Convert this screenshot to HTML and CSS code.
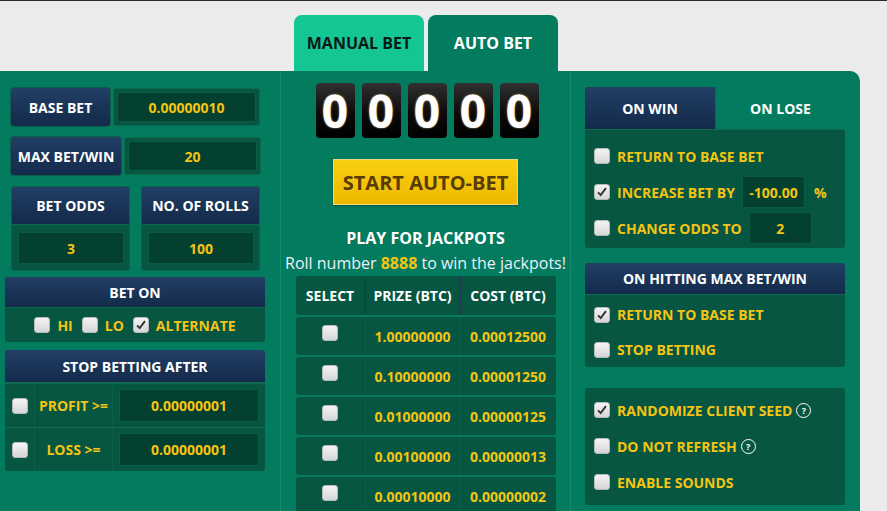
FILE: index.html
```html
<!DOCTYPE html>
<html lang="en">
<head>
    <meta charset="UTF-8">
    <meta name="viewport" content="width=device-width, initial-scale=1.0">
    <title>Auto Bet</title>
    <link rel="stylesheet" href="styles.css">
</head>
<body>
    <div class="tabs">
        <div class="tab tab-manual">MANUAL BET</div>
        <div class="tab tab-auto">AUTO BET</div>
    </div>

    <div class="panel">
        <div class="col col-left">
            <div class="field">
                <div class="field-label label-base">BASE BET</div>
                <div class="field-value value-base"><div class="input">0.00000010</div></div>
            </div>
            <div class="field field-max">
                <div class="field-label label-max">MAX BET/WIN</div>
                <div class="field-value value-max"><div class="input">20</div></div>
            </div>

            <div class="odds">
                <div class="odds-box">
                    <div class="navy odds-head">BET ODDS</div>
                    <div class="odds-body"><div class="input">3</div></div>
                </div>
                <div class="odds-box">
                    <div class="navy odds-head">NO. OF ROLLS</div>
                    <div class="odds-body"><div class="input">100</div></div>
                </div>
            </div>

            <div class="box bet-on">
                <div class="navy box-head">BET ON</div>
                <div class="bet-on-body">
                    <span class="check"></span><span class="yl">HI</span>
                    <span class="check"></span><span class="yl">LO</span>
                    <span class="check on"><svg viewBox="0 0 16 16"><path d="M3.5 8.5 L6.5 11.5 L12.5 3.5" /></svg></span><span class="yl">ALTERNATE</span>
                </div>
            </div>

            <div class="box stop">
                <div class="navy box-head stop-head">STOP BETTING AFTER</div>
                <div class="stop-row">
                    <div class="stop-cell"><span class="check"></span></div>
                    <div class="stop-cell yl">PROFIT &gt;=</div>
                    <div class="stop-cell stop-value"><div class="input">0.00000001</div></div>
                </div>
                <div class="stop-row">
                    <div class="stop-cell"><span class="check"></span></div>
                    <div class="stop-cell yl">LOSS &gt;=</div>
                    <div class="stop-cell stop-value"><div class="input">0.00000001</div></div>
                </div>
            </div>
        </div>

        <div class="col col-center">
            <div class="counter">
                <div class="digit">0</div>
                <div class="digit">0</div>
                <div class="digit">0</div>
                <div class="digit">0</div>
                <div class="digit">0</div>
            </div>
            <div class="start-btn">START AUTO-BET</div>
            <div class="jp-title">PLAY FOR JACKPOTS</div>
            <div class="jp-text">Roll number <b>8888</b> to win the jackpots!</div>
            <div class="jp-table">
                <div class="jp-row jp-head navy">
                    <div class="jp-cell">SELECT</div>
                    <div class="jp-cell">PRIZE (BTC)</div>
                    <div class="jp-cell">COST (BTC)</div>
                </div>
                <div class="jp-row">
                    <div class="jp-cell"><span class="check"></span></div>
                    <div class="jp-cell">1.00000000</div>
                    <div class="jp-cell">0.00012500</div>
                </div>
                <div class="jp-row">
                    <div class="jp-cell"><span class="check"></span></div>
                    <div class="jp-cell">0.10000000</div>
                    <div class="jp-cell">0.00001250</div>
                </div>
                <div class="jp-row">
                    <div class="jp-cell"><span class="check"></span></div>
                    <div class="jp-cell">0.01000000</div>
                    <div class="jp-cell">0.00000125</div>
                </div>
                <div class="jp-row">
                    <div class="jp-cell"><span class="check"></span></div>
                    <div class="jp-cell">0.00100000</div>
                    <div class="jp-cell">0.00000013</div>
                </div>
                <div class="jp-row">
                    <div class="jp-cell"><span class="check"></span></div>
                    <div class="jp-cell">0.00010000</div>
                    <div class="jp-cell">0.00000002</div>
                </div>
            </div>
        </div>

        <div class="col col-right">
            <div class="box win-lose">
                <div class="wl-tabs">
                    <div class="navy wl-tab">ON WIN</div>
                    <div class="wl-tab wl-lose">ON LOSE</div>
                </div>
                <div class="opt-body wl-body">
                    <div class="opt"><span class="check"></span><span class="yl">RETURN TO BASE BET</span></div>
                    <div class="opt"><span class="check on"><svg viewBox="0 0 16 16"><path d="M3.5 8.5 L6.5 11.5 L12.5 3.5" /></svg></span><span class="yl">INCREASE BET BY</span><div class="input small-input inc-input">-100.00</div><span class="yl pct">%</span></div>
                    <div class="opt"><span class="check"></span><span class="yl">CHANGE ODDS TO</span><div class="input small-input odds-input">2</div></div>
                </div>
            </div>

            <div class="box max-box">
                <div class="navy box-head max-head">ON HITTING MAX BET/WIN</div>
                <div class="opt-body max-body">
                    <div class="opt"><span class="check on"><svg viewBox="0 0 16 16"><path d="M3.5 8.5 L6.5 11.5 L12.5 3.5" /></svg></span><span class="yl">RETURN TO BASE BET</span></div>
                    <div class="opt"><span class="check"></span><span class="yl">STOP BETTING</span></div>
                </div>
            </div>

            <div class="box opt-body misc-box">
                <div class="opt"><span class="check on"><svg viewBox="0 0 16 16"><path d="M3.5 8.5 L6.5 11.5 L12.5 3.5" /></svg></span><span class="yl">RANDOMIZE CLIENT SEED</span><span class="help">?</span></div>
                <div class="opt"><span class="check"></span><span class="yl">DO NOT REFRESH</span><span class="help">?</span></div>
                <div class="opt"><span class="check"></span><span class="yl">ENABLE SOUNDS</span></div>
            </div>
        </div>
    </div>
</body>
</html>
```

FILE: styles.css
```css
:root {
    --green: #037b5e;
    --green-line: #139072;
    --box: #065641;
    --input: #03402f;
    --navy-top: #223f66;
    --navy-bottom: #132a4a;
    --yellow: #f4c414;
}

* {
    margin: 0;
    padding: 0;
    box-sizing: border-box;
}

body {
    background: #ebebeb;
    border-top: 1px solid #2a2a2a;
    font-family: 'Open Sans', 'Liberation Sans', sans-serif;
    font-weight: 700;
    font-size: 14px;
    color: #fff;
    overflow: hidden;
}

.navy {
    background: linear-gradient(var(--navy-top), var(--navy-bottom));
    color: #fff;
}

.yl {
    color: var(--yellow);
    white-space: nowrap;
}

.tabs {
    display: flex;
    gap: 4px;
    padding: 14px 0 0 294px;
}

.tab {
    width: 130px;
    height: 56px;
    border-radius: 8px 8px 0 0;
    display: flex;
    align-items: center;
    justify-content: center;
    font-size: 16px;
}

.tab-manual {
    background: #15c695;
    color: #0c1a16;
}

.tab-auto {
    background: var(--green);
    color: #fff;
}

.panel {
    width: 860px;
    height: 440px;
    background: var(--green);
    border-top-right-radius: 10px;
    display: flex;
    overflow: hidden;
}

.col {
    flex: none;
}

/* inputs */

.input {
    background: var(--input);
    border: 1px solid #0a5c46;
    border-radius: 2px;
    color: var(--yellow);
    display: flex;
    align-items: center;
    justify-content: center;
    width: 100%;
    height: 100%;
}

/* left column */

.col-left {
    width: 280px;
    padding: 17px 0 0 5px;
}

.field {
    display: flex;
    gap: 3px;
    height: 38px;
    margin-left: 6px;
}

.field-max {
    margin-top: 11px;
}

.field-label {
    background: linear-gradient(var(--navy-top), var(--navy-bottom));
    border-radius: 3px;
    display: flex;
    align-items: center;
    justify-content: center;
    box-shadow: 0 0 0 1px #0b5f48;
    white-space: nowrap;
}

.label-base { width: 99px; }
.label-max { width: 110px; }

.field-value {
    background: var(--box);
    border: 1px solid #0b684f;
    border-radius: 3px;
    padding: 3px;
}

.value-base { width: 147px; }
.value-max { width: 137px; }

.odds {
    display: flex;
    gap: 11px;
    margin: 11px 0 6px 6px;
}

.odds-box {
    width: 119px;
    height: 85px;
    background: var(--box);
    border-radius: 3px;
    overflow: hidden;
    border: 1px solid #0a6249;
}

.odds-head {
    height: 38px;
    display: flex;
    align-items: center;
    justify-content: center;
    border-bottom: 1px solid #0d6a52;
}

.odds-body {
    height: 45px;
    padding: 7px 5px 6px 6px;
}

.box {
    width: 260px;
    background: var(--box);
    border-radius: 3px;
    overflow: hidden;
}

.box-head {
    height: 31px;
    display: flex;
    align-items: center;
    justify-content: center;
    border-bottom: 1px solid #0e6b52;
}

.bet-on-body {
    height: 34px;
    display: flex;
    align-items: center;
    justify-content: center;
}

.bet-on-body .check {
    margin-right: 7px;
}

.bet-on-body .yl {
    margin-right: 9px;
}

.bet-on-body .yl:last-child {
    margin-right: 0;
}

.stop {
    margin-top: 8px;
}

.stop-head {
    height: 33px;
}

.stop-row {
    display: grid;
    grid-template-columns: 30px 78px 1fr;
    height: 44px;
    border-top: 1px solid #0d6c52;
}

.stop-cell {
    display: flex;
    align-items: center;
    justify-content: center;
    border-right: 1px solid #0b5e48;
}

.stop-cell:last-child {
    border-right: none;
}

.stop-value {
    padding: 5px 6px 5px 6px;
}

/* checkbox */

.check {
    display: inline-block;
    flex: none;
    width: 16px;
    height: 16px;
    border-radius: 3px;
    border: 1px solid #b9b9b9;
    background: linear-gradient(#f4f4f4, #d6d6d6);
}

.check svg {
    display: block;
    width: 14px;
    height: 14px;
}

.check svg path {
    fill: none;
    stroke: #333;
    stroke-width: 2.2;
}

/* center column */

.col-center {
    width: 291px;
    border-left: 1px solid var(--green-line);
    border-right: 1px solid var(--green-line);
    display: flex;
    flex-direction: column;
    align-items: center;
    padding-top: 12px;
}

.col-center > * {
    flex: none;
}

.counter {
    display: flex;
    gap: 7px;
    margin-left: 3px;
}

.digit {
    width: 39px;
    height: 55px;
    border-radius: 4px;
    background: linear-gradient(#303030, #0b0b0b 55%, #000);
    color: #fff;
    font-size: 46px;
    font-weight: 700;
    line-height: 55px;
    text-align: center;
    text-shadow: 0 0 2px #e8c070;
}

.start-btn {
    margin-top: 21px;
    width: 185px;
    height: 46px;
    background: linear-gradient(#f8d012, #efb800);
    border: 1px solid #e8dc7c;
    color: #573d05;
    font-size: 20px;
    font-weight: 700;
    display: flex;
    align-items: center;
    justify-content: center;
    box-shadow: 0 1px 2px rgba(0, 0, 0, 0.3);
}

.jp-title {
    margin-top: 23px;
    font-size: 16px;
    line-height: 20px;
}

.jp-text {
    margin-top: 4px;
    font-size: 16px;
    font-weight: 400;
    line-height: 22px;
    color: #eef;
}

.jp-text b {
    color: var(--yellow);
    font-weight: 700;
}

.jp-table {
    margin-top: 2px;
    width: 260px;
    display: flex;
    flex-direction: column;
    gap: 2px;
}

.jp-row {
    flex: none;
    display: grid;
    grid-template-columns: 70px 95px 95px;
    height: 38px;
    background: var(--box);
    border-radius: 3px;
    color: var(--yellow);
}

.jp-head {
    height: 39px;
    color: #fff;
}

.jp-cell {
    display: flex;
    align-items: center;
    justify-content: center;
    border-right: 1px solid #0a5e48;
    white-space: nowrap;
}

.jp-head .jp-cell {
    border-right-color: #1e3556;
}

.jp-cell:last-child {
    border-right: none;
}

.jp-row .check {
    margin-top: -6px;
}

/* right column */

.col-right {
    width: 288px;
    padding: 16px 0 0 14px;
}

.wl-tabs {
    display: grid;
    grid-template-columns: 130px 130px;
    height: 43px;
    border-bottom: 1px solid #0e6b52;
}

.wl-tab {
    display: flex;
    align-items: center;
    justify-content: center;
}

.wl-lose {
    background: var(--green);
    border-left: 1px solid #0d6a52;
}

.opt-body {
    padding: 8px 0 0 9px;
}

.wl-body {
    height: 118px;
}

.opt {
    display: flex;
    align-items: center;
    height: 36px;
    gap: 7px;
}

.small-input {
    width: 63px;
    height: 32px;
    flex: none;
}

.pct {
    margin-left: 2px;
}

.max-box {
    margin-top: 15px;
}

.max-head {
    height: 32px;
}

.max-body {
    height: 72px;
    padding-top: 2px;
}

.max-body .opt {
    height: 35px;
}

.misc-box {
    margin-top: 21px;
    height: 117px;
    padding-top: 4px;
}

.help {
    width: 15px;
    height: 15px;
    border: 1.5px solid #fff;
    border-radius: 50%;
    color: #fff;
    font-size: 9px;
    display: flex;
    align-items: center;
    justify-content: center;
    margin-left: -3px;
}
```
